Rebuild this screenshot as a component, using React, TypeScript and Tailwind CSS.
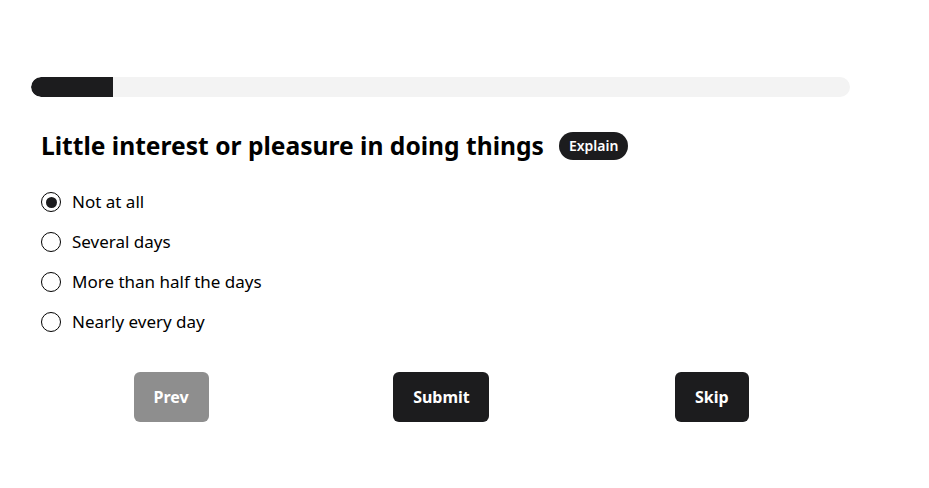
import React, { useState } from "react";

const options = ["Not at all", "Several days", "More than half the days", "Nearly every day"];

export default function App() {
  const [sel, setSel] = useState(0);
  return (
    <div className="min-h-screen bg-white text-black" style={{ fontFamily: '"Noto Sans", "Open Sans", sans-serif' }}>
      <div className="pl-[31px] pt-[77px] w-[850px]">
        <div className="h-5 w-[819px] rounded-full bg-[#f3f3f3] overflow-hidden">
          <div className="h-full w-[82px] rounded-l-full bg-[#1c1c1e]" />
        </div>
        <div className="px-[10px]">
          <div className="mt-[32px] flex items-center gap-[15px] h-[34px]">
            <h1 className="text-[24.6px] font-bold leading-[34px]">Little interest or pleasure in doing things</h1>
            <span className="h-[28px] px-[10px] rounded-full bg-[#1c1c1e] text-white text-[14px] font-semibold leading-[28px]">Explain</span>
          </div>
          <div className="mt-[19px] flex flex-col">
            {options.map((o, i) => (
              <label key={o} className="flex items-center gap-[11px] h-[40px] cursor-pointer" onClick={() => setSel(i)}>
                <span className="w-[20px] h-[20px] rounded-full border-[1.5px] border-black flex items-center justify-center">
                  {sel === i && <span className="w-[11px] h-[11px] rounded-full bg-[#1c1c1e]" />}
                </span>
                <span className="text-[17px] leading-[24px]">{o}</span>
              </label>
            ))}
          </div>
        </div>
        <div className="mt-[30px] ml-[5px] w-[811px] grid grid-cols-3">
          <div className="flex justify-center">
            <button className="w-[75px] h-[50px] rounded-[6px] bg-[#8e8e8e] text-white text-[16px] font-bold">Prev</button>
          </div>
          <div className="flex justify-center">
            <button className="w-[96px] h-[50px] rounded-[6px] bg-[#1c1c1e] text-white text-[16px] font-bold">Submit</button>
          </div>
          <div className="flex justify-center">
            <button className="w-[74px] h-[50px] rounded-[6px] bg-[#1c1c1e] text-white text-[16px] font-bold">Skip</button>
          </div>
        </div>
      </div>
    </div>
  );
}
